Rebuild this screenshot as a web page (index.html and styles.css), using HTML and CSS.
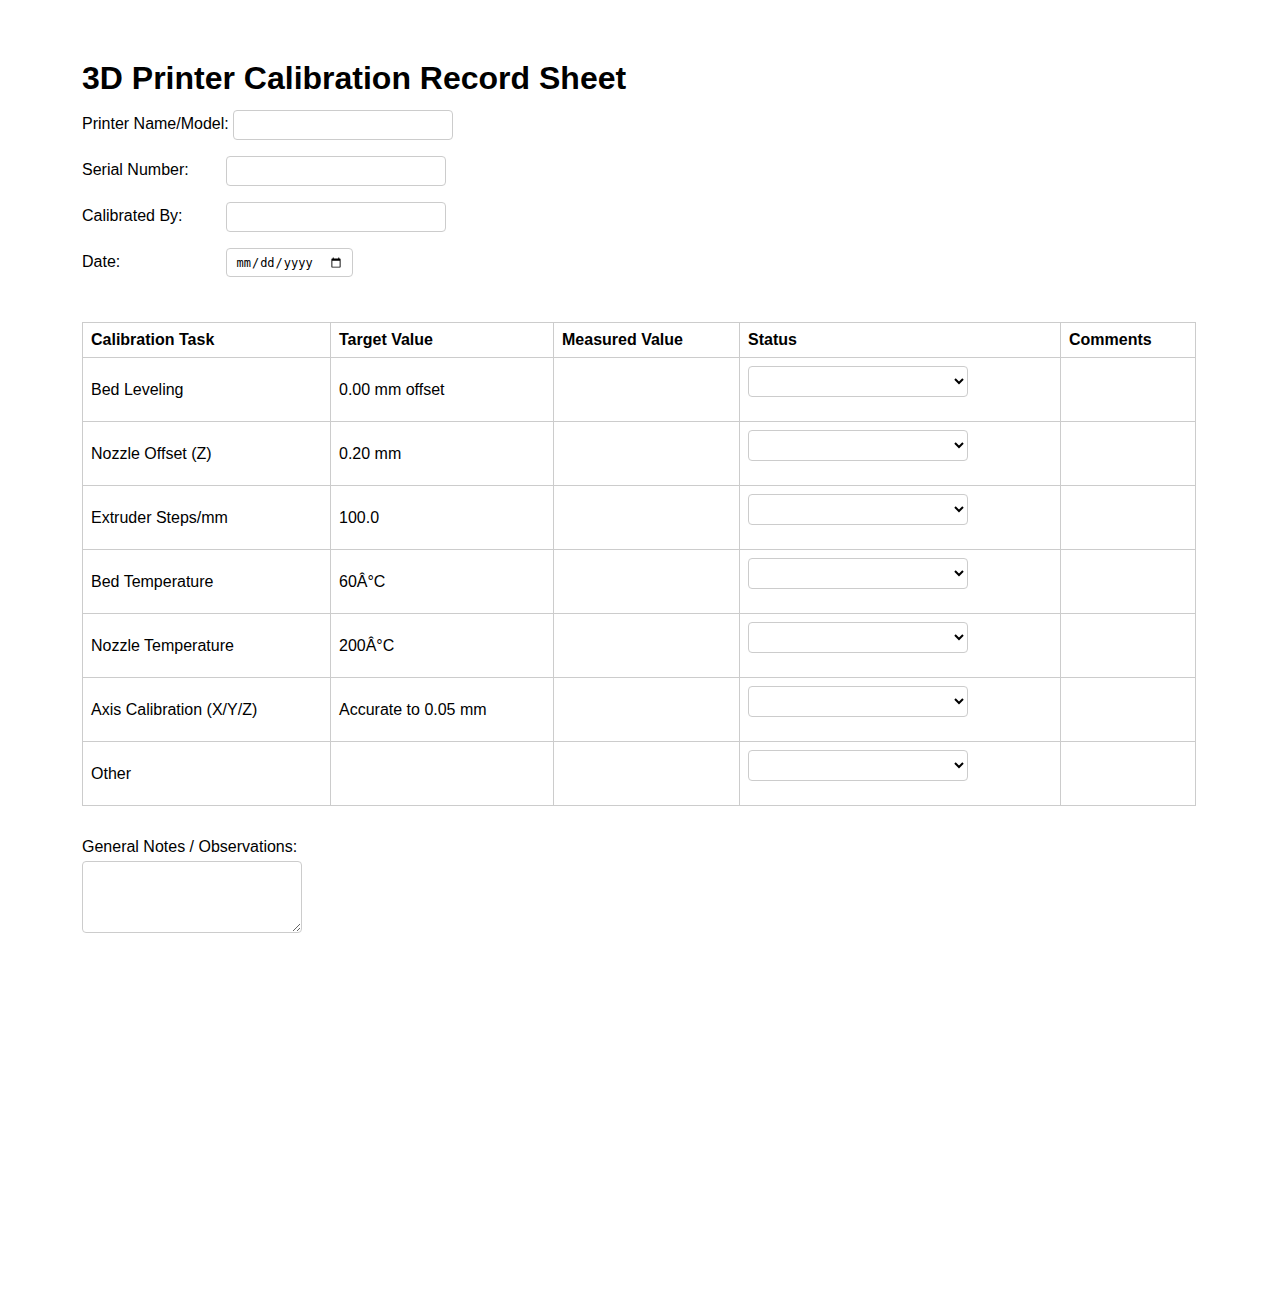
FILE: index.html
```html
<!DOCTYPE html>
<html>
	<head>
		<meta charset="utf-8">
		<meta name="viewport" content="width=device-width, initial-scale=1.0">
		<title>3D Printer Calibration Record Sheet</title>
		<link rel="stylesheet" href="styles.css">
	</head>
	<body>
		<div class="sheet">
			<h1>3D Printer Calibration Record Sheet</h1>

			<div class="field">
				<label for="printer">Printer Name/Model:</label>
				<input type="text" id="printer">
			</div>
			<div class="field">
				<label for="serial">Serial Number:</label>
				<input type="text" id="serial">
			</div>
			<div class="field">
				<label for="tech">Calibrated By:</label>
				<input type="text" id="tech">
			</div>
			<div class="field">
				<label for="date">Date:</label>
				<input type="date" id="date" class="date">
			</div>

			<table class="calib">
				<thead>
					<tr>
						<th class="c-task">Calibration Task</th>
						<th class="c-target">Target Value</th>
						<th class="c-measured">Measured Value</th>
						<th class="c-status">Status</th>
						<th class="c-comments">Comments</th>
					</tr>
				</thead>
				<tbody>
					<tr>
						<td>Bed Leveling</td>
						<td>0.00 mm offset</td>
						<td></td>
						<td class="status"><select><option value=""></option><option>Pass</option><option>Fail</option><option>Adjusted</option></select></td>
						<td></td>
					</tr>
					<tr>
						<td>Nozzle Offset (Z)</td>
						<td>0.20 mm</td>
						<td></td>
						<td class="status"><select><option value=""></option><option>Pass</option><option>Fail</option><option>Adjusted</option></select></td>
						<td></td>
					</tr>
					<tr>
						<td>Extruder Steps/mm</td>
						<td>100.0</td>
						<td></td>
						<td class="status"><select><option value=""></option><option>Pass</option><option>Fail</option><option>Adjusted</option></select></td>
						<td></td>
					</tr>
					<tr>
						<td>Bed Temperature</td>
						<td>60Â°C</td>
						<td></td>
						<td class="status"><select><option value=""></option><option>Pass</option><option>Fail</option><option>Adjusted</option></select></td>
						<td></td>
					</tr>
					<tr>
						<td>Nozzle Temperature</td>
						<td>200Â°C</td>
						<td></td>
						<td class="status"><select><option value=""></option><option>Pass</option><option>Fail</option><option>Adjusted</option></select></td>
						<td></td>
					</tr>
					<tr>
						<td>Axis Calibration (X/Y/Z)</td>
						<td>Accurate to 0.05 mm</td>
						<td></td>
						<td class="status"><select><option value=""></option><option>Pass</option><option>Fail</option><option>Adjusted</option></select></td>
						<td></td>
					</tr>
					<tr>
						<td>Other</td>
						<td></td>
						<td></td>
						<td class="status"><select><option value=""></option><option>Pass</option><option>Fail</option><option>Adjusted</option></select></td>
						<td></td>
					</tr>
				</tbody>
			</table>

			<div class="notes">
				<label for="notes">General Notes / Observations:</label>
				<textarea id="notes"></textarea>
			</div>
		</div>
	</body>
</html>
```

FILE: styles.css
```css
* {
	box-sizing: border-box;
}

body {
	margin: 0;
	font-family: "Liberation Sans", Arial, sans-serif;
	font-size: 16px;
	color: #000;
	background: #fff;
}

.sheet {
	padding: 60px 82px 60px;
}

h1 {
	margin: 0 0 13px;
	font-size: 32px;
	font-weight: bold;
}

/* 表头信息 */
.field {
	margin-bottom: 16px;
}

.field label {
	display: inline-block;
	min-width: 140px;
}

.field input {
	width: 220px;
	height: 30px;
	padding: 6px;
	border: 1px solid #ccc;
	border-radius: 4px;
	vertical-align: middle;
}

.field input.date {
	width: 127px;
	height: 29px;
	padding: 4px 8px;
	font-size: 12px;
}

/* 校准表格 */
.calib {
	width: 100%;
	margin-top: 45px;
	border-collapse: collapse;
}

.calib th,
.calib td {
	border: 1px solid #ccc;
	padding: 8px;
	text-align: left;
}

.calib th {
	font-weight: bold;
	height: 35px;
}

.calib td {
	height: 64px;
}

.c-task { width: 248px; }
.c-target { width: 223px; }
.c-measured { width: 186px; }
.c-status { width: 321px; }

.calib td.status {
	vertical-align: top;
}

.calib select {
	width: 220px;
	height: 31px;
	border: 1px solid #ccc;
	border-radius: 4px;
	background: #fff;
}

/* 备注 */
.notes {
	margin-top: 32px;
}

.notes label {
	display: block;
	margin-bottom: 5px;
}

.notes textarea {
	width: 220px;
	height: 72px;
	border: 1px solid #ccc;
	border-radius: 4px;
}
```
